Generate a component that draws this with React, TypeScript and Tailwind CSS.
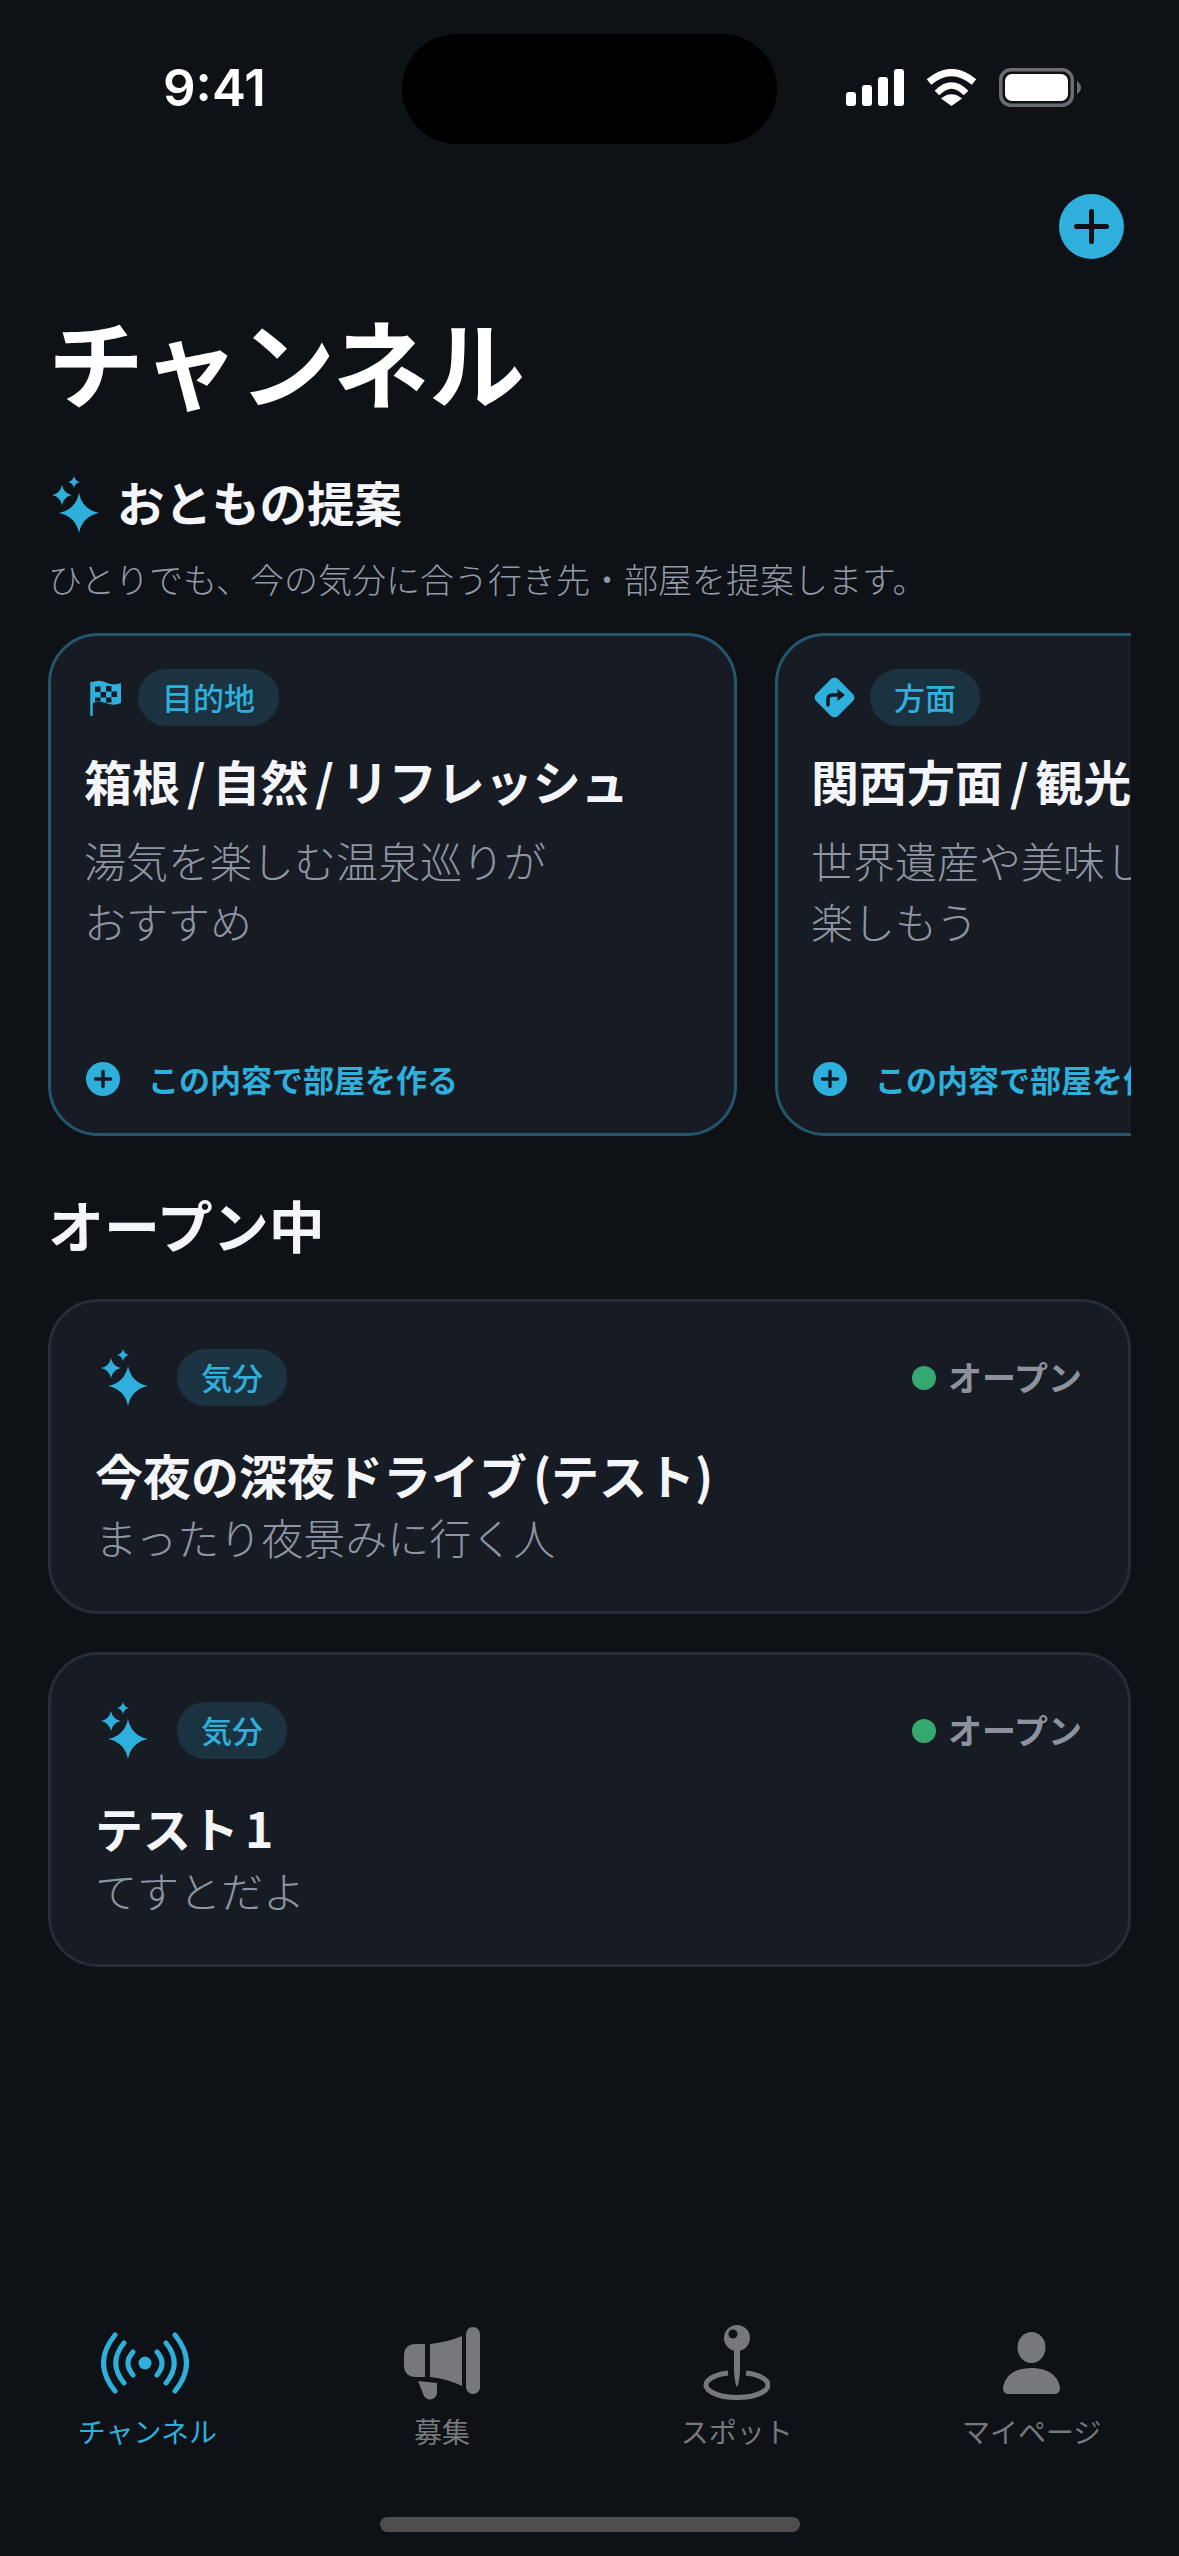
import React from "react";

const Star = ({ cx, cy, r }: { cx: number; cy: number; r: number }) => {
  const k = r * 0.17;
  return (
    <path
      d={`M${cx} ${cy - r}Q${cx + k} ${cy - k} ${cx + r} ${cy}Q${cx + k} ${cy + k} ${cx} ${cy + r}Q${cx - k} ${cy + k} ${cx - r} ${cy}Q${cx - k} ${cy - k} ${cx} ${cy - r}Z`}
    />
  );
};

const Sparkles = () => (
  <svg width="47" height="57" viewBox="0 0 47 57" fill="#2eafdc" className="shrink-0">
    <Star cx={27} cy={37} r={20} />
    <Star cx={10} cy={19} r={10} />
    <Star cx={22} cy={6} r={6} />
  </svg>
);

const Flag = () => (
  <svg width="34" height="36" viewBox="0 0 34 36" className="shrink-0">
    <path d="M2.5 3V35" stroke="#2eafdc" strokeWidth="2.5" strokeLinecap="round" />
    <path d="M2 3Q9 -1 17 2.500Q25 6 32 3V23Q25 26.500 17 23Q9 20 2 24Z" fill="#2eafdc" />
    <g fill="#171c24">
      <rect x="6" y="6.500" width="5.500" height="5.500" />
      <rect x="17" y="6" width="5.500" height="5.500" />
      <rect x="11.500" y="12" width="5.500" height="5.500" />
      <rect x="22.500" y="11.500" width="5.500" height="5.500" />
      <rect x="6" y="17.500" width="5.500" height="4" />
      <rect x="17" y="17.500" width="5.500" height="5" />
    </g>
  </svg>
);

const Turn = () => (
  <svg width="43" height="43" viewBox="0 0 43 43" className="shrink-0">
    <rect x="6" y="6" width="31" height="31" rx="5" transform="rotate(45 21.500 21.500)" fill="#2eafdc" />
    <path d="M15 29V23.500Q15 19 19.500 19H25" fill="none" stroke="#171c24" strokeWidth="3.500" strokeLinecap="round" />
    <path d="M24.500 13L32 19L24.500 25Z" fill="#171c24" />
  </svg>
);

const PlusCircle = ({ size, bar, thick, color }: { size: number; bar: number; thick: number; color: string }) => {
  const c = size / 2;
  const h = bar / 2;
  return (
    <svg width={size} height={size} viewBox={`0 0 ${size} ${size}`} className="shrink-0">
      <circle cx={c} cy={c} r={c} fill="#2eafdc" />
      <path
        d={`M${c - h} ${c}H${c + h}M${c} ${c - h}V${c + h}`}
        stroke={color}
        strokeWidth={thick}
        strokeLinecap="round"
      />
    </svg>
  );
};

const Pill = ({ children, className }: { children: React.ReactNode; className: string }) => (
  <span
    className={`flex h-[57px] items-center justify-center rounded-full bg-[#1b3340] text-[31px] font-medium text-[#2eafdc] ${className}`}
  >
    {children}
  </span>
);

const Suggestion = ({
  icon,
  tag,
  pillClass,
  gapClass,
  title,
  lines,
}: {
  icon: React.ReactNode;
  tag: string;
  pillClass: string;
  gapClass: string;
  title: string;
  lines: string[];
}) => (
  <div className="flex h-[503px] w-[689px] shrink-0 flex-col rounded-[50px] border-[3px] border-[#23566b] bg-[#171c24] pb-[34px] pl-[33px] pt-[33px]">
    <div className={`flex h-[57px] items-center ${gapClass}`}>
      {icon}
      <Pill className={pillClass}>{tag}</Pill>
    </div>
    <div className="mt-[24px] whitespace-nowrap text-[48px] font-bold leading-[60px] text-[#f4f5f8] [word-spacing:-4px]">
      {title}
    </div>
    <div className="mt-[19px] whitespace-nowrap text-[42px] font-light leading-[61px] text-[#8f96a3]">
      {lines.map((l) => (
        <div key={l}>{l}</div>
      ))}
    </div>
    <div className="mt-auto flex h-[40px] items-center gap-[28px] pl-[2px]">
      <PlusCircle size={34} bar={15} thick={3.5} color="#171c24" />
      <span className="whitespace-nowrap text-[31px] font-bold text-[#2eafdc]">この内容で部屋を作る</span>
    </div>
  </div>
);

const Room = ({ title, sub }: { title: string; sub: string }) => (
  <div className="flex h-[315px] w-[1083px] flex-col rounded-[50px] border-[3px] border-[#262d38] bg-[#171c24] pl-[44px] pr-[46px] pt-[47px]">
    <div className="flex h-[57px] items-center">
      <span className="ml-[6px] flex">
        <Sparkles />
      </span>
      <Pill className="ml-[29px] w-[110px]">気分</Pill>
      <span className="ml-auto h-[24px] w-[24px] rounded-full bg-[#35a86f]" />
      <span className="ml-[12px] pb-[2px] text-[34px] font-bold text-[#8d939e]">オープン</span>
    </div>
    <div className="mt-[40px] whitespace-nowrap text-[48px] font-bold leading-[56px] text-[#f4f5f8] [word-spacing:-5px]">
      {title}
    </div>
    <div className="mt-[7px] whitespace-nowrap text-[42px] font-light leading-[56px] text-[#8f96a3]">{sub}</div>
  </div>
);

const Tab = ({ icon, label, active }: { icon: React.ReactNode; label: string; active?: boolean }) => (
  <div className="flex flex-col items-center">
    {icon}
    <span className={`mt-[13px] text-[28px] leading-[36px] ${active ? "text-[#2eafdc]" : "text-[#76787c]"}`}>
      {label}
    </span>
  </div>
);

const Antenna = () => (
  <svg width="88" height="75" viewBox="0 0 88 75" fill="none" stroke="#2eafdc" strokeWidth="5" strokeLinecap="round" className="-translate-x-[2px]">
    <g transform="translate(0 7)">
      <circle cx="44" cy="31" r="6.500" fill="#2eafdc" stroke="none" />
      <path d="M14 3Q-9 31 14 59M23 11Q6.500 31 23 51M32 20Q22 31 32 43" />
      <path d="M74 3Q97 31 74 59M65 11Q81.500 31 65 51M56 20Q66 31 56 43" />
    </g>
  </svg>
);

const Megaphone = () => (
  <svg width="76" height="75" viewBox="0 0 76 75" fill="#76787c">
    <g transform="translate(0 2)">
      <rect x="62" y="0" width="14" height="67" rx="7" />
      <path d="M26 17Q44 15 58 9V59Q44 52 26 50Z" />
      <path d="M21 17V50H12Q0 50 0 38V29Q0 17 12 17Z" />
      <path d="M14 54L33 56V66A7 7 0 0 1 20 69Z" />
    </g>
  </svg>
);

const Spot = () => (
  <svg width="67" height="75" viewBox="0 0 67 75" fill="#76787c">
    <circle cx="34" cy="13" r="13" />
    <circle cx="30" cy="9" r="4.500" fill="#0e1116" />
    <path d="M31 24H37V46Q36 60 34 62Q32 60 31 46Z" />
    <path d="M25 48A31 12.500 0 1 0 43 48" fill="none" stroke="#76787c" strokeWidth="5" />
  </svg>
);

const Person = () => (
  <svg width="57" height="75" viewBox="0 0 57 75" fill="#76787c">
    <g transform="translate(0 7)">
      <ellipse cx="28.500" cy="15.500" rx="14" ry="15.500" />
      <path d="M6 62Q0 62 0 56C2 42 14 36 28.500 36C43 36 55 42 57 56Q57 62 51 62Z" />
    </g>
  </svg>
);

export default function App() {
  return (
    <div
      lang="ja"
      className="flex h-[2556px] w-[1179px] flex-col overflow-hidden bg-[#0e1116]"
      style={{ fontFamily: '"Noto Sans CJK JP", "Noto Sans", sans-serif' }}
    >
      {/* status bar */}
      <div className="flex h-[144px] pt-[34px]">
        <div className="w-[402px] pl-[163px] pt-[24px] font-['Inter',sans-serif] text-[51px] font-semibold leading-[60px] text-white">
          9:41
        </div>
        <div className="h-[110px] w-[375px] rounded-[55px] bg-black" />
        <div className="flex items-start gap-[22px] pl-[69px] pt-[35px]">
          <svg width="58" height="37" viewBox="0 0 58 37" fill="#fff">
            <rect x="0" y="23" width="10" height="14" rx="3" />
            <rect x="16" y="16" width="10" height="21" rx="3" />
            <rect x="32" y="8" width="10" height="29" rx="3" />
            <rect x="48" y="0" width="10" height="37" rx="3" />
          </svg>
          <svg width="51" height="37" viewBox="0 0 51 37" fill="none" stroke="#fff">
            <path d="M3 13Q25.500 -6 48 13" strokeWidth="7" />
            <path d="M11 24Q25.500 9 40 24" strokeWidth="6.500" />
            <path d="M25.500 37L15 29.500Q25.500 21 36 29.500Z" fill="#fff" stroke="none" />
          </svg>
          <svg width="82" height="39" viewBox="0 0 82 39" className="-mt-[1px]">
            <rect x="1.750" y="1.750" width="71.500" height="35.500" rx="10" fill="none" stroke="#6a6c70" strokeWidth="3.500" />
            <rect x="6" y="6" width="63" height="27" rx="7" fill="#fff" />
            <path d="M78 13Q82 16 82 19.500Q82 23 78 26Z" fill="#6a6c70" />
          </svg>
        </div>
      </div>

      {/* add button */}
      <div className="mt-[50px] flex justify-end pr-[55px]">
        <PlusCircle size={65} bar={30} thick={5} color="#0e1116" />
      </div>

      <h1 className="mt-[46px] pl-[48px] text-[96px] font-bold leading-[110px] text-white">チャンネル</h1>

      <div className="mt-[61px] flex items-center gap-[18px] pl-[52px]">
        <Sparkles />
        <span className="pb-[6px] text-[47.500px] font-bold leading-[51px] text-[#f4f5f8]">おともの提案</span>
      </div>
      <p className="mt-[24px] pl-[48px] text-[34px] font-light leading-[44px] text-[#939aa7]">
        ひとりでも、今の気分に合う行き先・部屋を提案します。
      </p>

      <div className="ml-[48px] mt-[32px] flex w-[1083px] gap-[38px] overflow-hidden">
        <Suggestion
          icon={<Flag />}
          tag="目的地"
          pillClass="w-[141px]"
          gapClass="gap-[15px] pl-[5px]"
          title="箱根 / 自然 / リフレッシュ"
          lines={["湯気を楽しむ温泉巡りが", "おすすめ"]}
        />
        <Suggestion
          icon={<Turn />}
          tag="方面"
          pillClass="w-[110px]"
          gapClass="gap-[14px] pl-[2px]"
          title="関西方面 / 観光"
          lines={["世界遺産や美味しいものを", "楽しもう"]}
        />
      </div>

      <h2 className="mt-[54px] pl-[48px] text-[56px] font-bold leading-[68px] text-[#f4f5f8]">オープン中</h2>

      <div className="ml-[48px] mt-[41px] flex flex-col gap-[38px]">
        <Room title="今夜の深夜ドライブ (テスト)" sub="まったり夜景みに行く人" />
        <Room title="テスト 1" sub="てすとだよ" />
      </div>

      <div className="mt-auto grid grid-cols-4">
        <Tab icon={<Antenna />} label="チャンネル" active />
        <Tab icon={<Megaphone />} label="募集" />
        <Tab icon={<Spot />} label="スポット" />
        <Tab icon={<Person />} label="マイページ" />
      </div>
      <div className="mb-[24px] mt-[68px] h-[15px] w-[420px] self-center rounded-full bg-[#4e4e4e]" />
    </div>
  );
}
